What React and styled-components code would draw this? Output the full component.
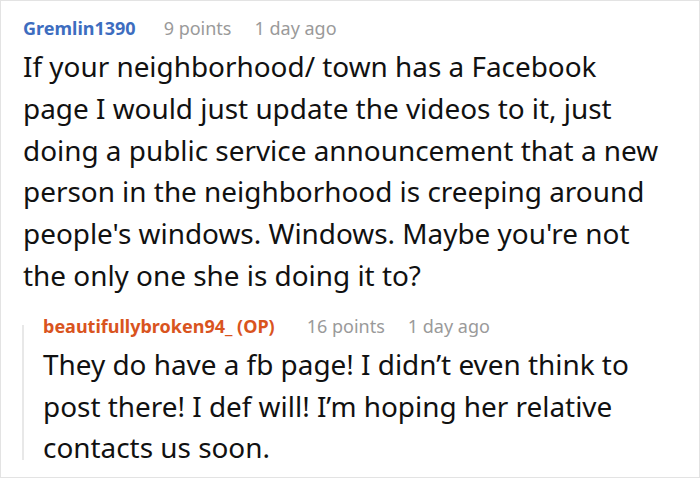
import React from "react";
import styled, { createGlobalStyle } from "styled-components";

const Global = createGlobalStyle`
  html, body { margin: 0; padding: 0; background: #fff; }
  body { font-family: "Noto Sans", "Open Sans", sans-serif; }
`;

const Frame = styled.div`
  box-sizing: border-box;
  width: 700px;
  height: 478px;
  border: 1px solid #e3e3e3;
  background: #fff;
  padding: 15px 20px 0 22px;
  overflow: hidden;
`;

const Meta = styled.div`
  display: flex;
  align-items: baseline;
  gap: 23px;
  font-size: 18px;
  line-height: 24px;
  white-space: nowrap;
`;

const Author = styled.span`
  font-weight: 700;
  color: ${(p) => (p.$op ? "#d9541e" : "#3d6dbf")};
  margin-right: ${(p) => (p.$op ? "9px" : "5px")};
`;

const Info = styled.span`
  color: #9a9a9a;
`;

const Body = styled.p`
  margin: 6px 0 0;
  font-size: 27.9px;
  line-height: 41.8px;
  color: #111;
`;

const Line = styled.span`
  display: block;
  white-space: nowrap;
`;

const Reply = styled.div`
  position: relative;
  margin-top: 17px;
  padding-left: 20px;
  &::before {
    content: "";
    position: absolute;
    left: -1px;
    top: 11px;
    bottom: 9px;
    width: 2px;
    background: #e8e8e8;
  }
`;

function Comment({ author, op, points, time, lines }) {
  return (
    <div>
      <Meta>
        <Author $op={op}>{author}</Author>
        <Info>{points}</Info>
        <Info>{time}</Info>
      </Meta>
      <Body>
        {lines.map((l, i) => (
          <Line key={i}>{l}</Line>
        ))}
      </Body>
    </div>
  );
}

export default function App() {
  return (
    <>
      <Global />
      <Frame>
        <Comment
          author="Gremlin1390"
          points="9 points"
          time="1 day ago"
          lines={[
            "If your neighborhood/ town has a Facebook",
            "page I would just update the videos to it, just",
            "doing a public service announcement that a new",
            "person in the neighborhood is creeping around",
            "people's windows. Windows. Maybe you're not",
            "the only one she is doing it to?",
          ]}
        />
        <Reply>
          <Comment
            author="beautifullybroken94_ (OP)"
            op
            points="16 points"
            time="1 day ago"
            lines={[
              "They do have a fb page! I didn’t even think to",
              "post there! I def will! I’m hoping her relative",
              "contacts us soon.",
            ]}
          />
        </Reply>
      </Frame>
    </>
  );
}
